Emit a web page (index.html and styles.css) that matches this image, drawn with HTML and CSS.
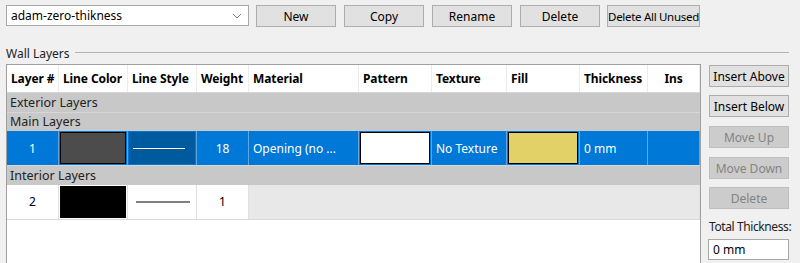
FILE: index.html
```html
<!DOCTYPE html>
<html lang="en">
<head>
    <meta charset="UTF-8">
    <title>Wall Layers</title>
<link rel="stylesheet" href="styles.css">
</head>
<body>
<div class="wrap">
    <div class="top-bar">
        <div class="combo">
            <span class="combo-text">adam-zero-thikness</span>
            <svg class="chev" width="10" height="6" viewBox="0 0 10 6"><path d="M1 1 L5 5 L9 1" fill="none" stroke="#7a7a7a" stroke-width="1"/></svg>
        </div>
        <button class="btn">New</button>
        <button class="btn">Copy</button>
        <button class="btn">Rename</button>
        <button class="btn">Delete</button>
        <button class="btn btn-wide">Delete All Unused</button>
    </div>

    <div class="group-title">
        <span>Wall Layers</span>
        <div class="group-line"></div>
    </div>

    <div class="main">
        <div class="grid">
            <div class="row head">
                <div class="cell">Layer #</div>
                <div class="cell">Line Color</div>
                <div class="cell">Line Style</div>
                <div class="cell">Weight</div>
                <div class="cell">Material</div>
                <div class="cell">Pattern</div>
                <div class="cell">Texture</div>
                <div class="cell">Fill</div>
                <div class="cell">Thickness</div>
                <div class="cell center">Ins</div>
            </div>
            <div class="section">Exterior Layers</div>
            <div class="section">Main Layers</div>
            <div class="row layer selected">
                <div class="cell center">1</div>
                <div class="cell swatch-cell"><div class="swatch dark"></div></div>
                <div class="cell style-cell"><div class="style-line"></div></div>
                <div class="cell center">18</div>
                <div class="cell">Opening (no ...</div>
                <div class="cell swatch-cell"><div class="swatch white"></div></div>
                <div class="cell">No Texture</div>
                <div class="cell swatch-cell"><div class="swatch yellow"></div></div>
                <div class="cell">0 mm</div>
                <div class="cell"></div>
            </div>
            <div class="section">Interior Layers</div>
            <div class="row layer plain">
                <div class="cell center">2</div>
                <div class="cell swatch-cell"><div class="swatch black"></div></div>
                <div class="cell style-cell"><div class="style-line"></div></div>
                <div class="cell center">1</div>
                <div class="cell rest"></div>
            </div>
        </div>

        <div class="side">
            <button class="btn side-btn">Insert Above</button>
            <button class="btn side-btn">Insert Below</button>
            <button class="btn side-btn step" disabled>Move Up</button>
            <button class="btn side-btn step" disabled>Move Down</button>
            <button class="btn side-btn" disabled>Delete</button>
            <div class="total-label">Total Thickness:</div>
            <div class="total-box">0 mm</div>
        </div>
    </div>
</div>
</body>
</html>
```

FILE: styles.css
```css
body {margin: 0; background: #f0f0f0; font-family: 'Noto Sans', sans-serif; font-size: 12px; color: #000;}
.wrap {width: 800px; height: 263px; overflow: hidden;}

.top-bar {display: flex; align-items: flex-start; padding: 5px 0 0 6px; gap: 8px;}
.combo {box-sizing: border-box; display: flex; align-items: center; justify-content: space-between; width: 243px; height: 21px; margin-right: -1px; padding: 0 6px 0 4px; background: #fff; border: 1px solid #a8a8a8;}
.chev {margin-top: 1px;}
.btn {box-sizing: border-box; width: 80px; height: 22px; padding: 0; background: #e1e1e1; border: 1px solid #adadad; font-family: inherit; font-size: 12px; color: #000; white-space: nowrap;}
.btn-wide {width: 93px; margin-left: -1px; font-size: 11.5px; letter-spacing: -0.3px;}
.btn:disabled {background: #cccccc; border-color: #bfbfbf; color: #838383;}

.group-title {display: flex; align-items: center; gap: 5px; margin: 18px 11px 0 6px; height: 16px; color: #222;}
.group-line {flex: 1; height: 1px; background: #b4b4b4; margin-top: -2px;}

.main {display: flex; gap: 8px; margin: 3px 0 0 6px;}
.grid {box-sizing: border-box; width: 695px; height: 220px; background: #fff; border: 1px solid #a0a0a0; border-bottom: 0;}

.row {display: grid; grid-template-columns: 52px 69px 69px 52px 110px 73px 75px 73px 68px 52px;}
.cell {box-sizing: border-box; display: flex; align-items: center; padding-left: 4px; border-right: 1px solid #e4e4e4; white-space: nowrap; overflow: hidden;}
.cell.center {justify-content: center; padding-left: 0;}
.head {height: 27px;}
.head .cell {font-weight: bold; font-size: 12px; padding-left: 4px; letter-spacing: -0.1px; border-right-color: #ececec;}
.head .cell.center {padding-left: 0;}

.section {box-sizing: border-box; height: 19.5px; padding-left: 3px; display: flex; align-items: center; background: #c8c8c8; border-top: 1px solid #d6d6d6; color: #222; font-size: 12.5px;}

.layer {height: 34px;}
.selected {background: #0078d7; color: #fff;}
.selected .cell {border-right-color: #5ea6e6;}
.plain {grid-template-columns: 52px 69px 69px 52px 1fr; border-bottom: 1px solid #dadada; color: #000;}
.plain .cell {border-right-color: #e0e0e0; color: #000;}
.plain .rest {background: #e8e8e8;}

.swatch-cell {padding: 1px; align-items: stretch;}
.swatch {flex: 1; border: 1px solid #000;}
.swatch.dark {background: #4c4c4c;}
.swatch.white {background: #fff;}
.swatch.yellow {background: #e2d166;}
.swatch.black {background: #000;}

.style-cell {padding: 1px 6px 1px 4px; align-items: center;}
.selected .style-cell {background: #005a9e; background-clip: content-box; padding: 1px 1px 1px 1px;}
.style-line {width: 52px; height: 1px; margin-left: 4px; background: #fff;}
.plain .style-line {width: 58px; height: 2px; background: #808080;}

.side {display: flex; flex-direction: column; gap: 8px; padding-top: 1px;}
.side-btn {width: 80px;}
.side-btn.step {margin-top: 1px;}
.total-label {margin-top: 1px; color: #222; letter-spacing: -0.4px; white-space: nowrap;}
.total-box {box-sizing: border-box; width: 81px; height: 21px; margin: -4px 0 0 -1px; padding-left: 4px; line-height: 19px; background: #fff; border: 1px solid #a8a8a8;}
```
